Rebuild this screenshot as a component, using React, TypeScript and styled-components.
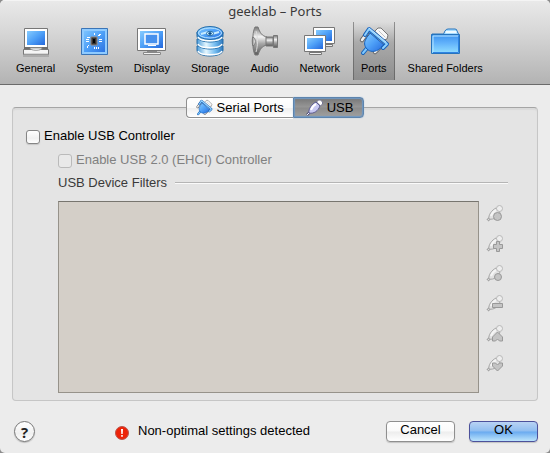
import React, { useState } from "react";
import styled, { createGlobalStyle } from "styled-components";

const GlobalStyle = createGlobalStyle`
  * { box-sizing: border-box; }
  body {
    margin: 0;
    background: #8c8c8c;
    font-family: "Liberation Sans", Arial, sans-serif;
    font-size: 13px;
    line-height: 16px;
    color: #000;
  }
  button, input { font: inherit; color: inherit; margin: 0; }
`;

const Window = styled.div`
  display: flex;
  flex-direction: column;
  min-height: 100vh;
  background: #ececec;
  border-radius: 5px;
  overflow: hidden;
`;

const Header = styled.header`
  background: linear-gradient(#e9e9e9, #d8d8d8 35%, #b3b3b3);
  border-bottom: 1px solid #6b6b6b;
  border-top: 1px solid #f4f4f4;
  padding: 0 8px 4px;
`;

const Title = styled.h1`
  margin: 0;
  padding-bottom: 1px;
  font: 13px/20px "Noto Sans", "Open Sans", sans-serif;
  color: #3a3a3a;
  text-align: center;
`;

const Toolbar = styled.nav`
  display: flex;
  gap: 5px;
`;

const ToolButton = styled.button<{ $active?: boolean }>`
  display: flex;
  flex-direction: column;
  align-items: center;
  gap: 4px;
  height: 58px;
  padding: 3px 0 0;
  border: 0;
  background: ${(p) =>
    p.$active
      ? "linear-gradient(90deg, rgba(70,70,70,.5) 1px, transparent 1px, transparent calc(100% - 1px), rgba(70,70,70,.5) calc(100% - 1px)), linear-gradient(rgba(0,0,0,0), rgba(0,0,0,.18) 35%, rgba(0,0,0,.22))"
      : "none"};
  font-size: 11px;
  line-height: 14px;
  white-space: nowrap;
`;

const ToolLabel = styled.span`
  padding: 0 8px;
`;

const Content = styled.main`
  flex: 1;
  display: flex;
  flex-direction: column;
  padding: 12px 12px 0;
`;

const Tabs = styled.div`
  display: flex;
  align-self: center;
  height: 21px;
  margin-bottom: -11px;
  z-index: 1;
`;

const Tab = styled.button<{ $active: boolean }>`
  display: flex;
  align-items: center;
  gap: 4px;
  padding: 0 9px;
  border: 1px solid ${(p) => (p.$active ? "#5d84ad" : "#8f8f8f")};
  background: ${(p) =>
    p.$active ? "linear-gradient(#777, #959595 45%, #8c8c8c 55%, #a0a0a0)" : "linear-gradient(#fff, #fafafa 50%, #eee 52%, #fff)"};
  box-shadow: ${(p) => (p.$active ? "0 0 1px #79a9dc, inset 0 0 1px 1px #6f98c4" : "0 1px 0 #fff")};
  line-height: 18px;
  &:first-child { border-radius: 4px 0 0 4px; border-right: 0; }
  &:last-child { border-radius: 0 4px 4px 0; padding: 0 10px 0 12px; }
`;

const Panel = styled.section`
  flex: 1;
  display: flex;
  flex-direction: column;
  padding: 20px 29px 7px 13px;
  background: #e4e4e4;
  border: 1px solid #c6c6c6;
  border-top: 1px solid #a5a5a5;
  border-radius: 4px;
  box-shadow: inset 0 2px 1px #dadada;
`;

const CheckLabel = styled.label<{ $muted?: boolean }>`
  display: flex;
  gap: 4px;
  height: 24px;
  margin-left: ${(p) => (p.$muted ? "32px" : "0")};
  color: ${(p) => (p.$muted ? "#808080" : "#000")};
  line-height: 15px;
`;

const Checkbox = styled.input`
  appearance: none;
  width: 14px;
  height: 14px;
  margin-top: 2px;
  border: 1px solid #858585;
  border-radius: 3px;
  background: linear-gradient(#fff, #f1f1f1 60%, #fff);
  box-shadow: 0 1px 1px #c6c6c6;
  &:checked { background: #69a5e8; }
  &:disabled { border-color: #bababa; background: #e9e9e9; box-shadow: none; }
`;

const Filters = styled.div`
  flex: 1;
  display: flex;
  flex-direction: column;
  padding-left: 32px;
`;

const FilterHeading = styled.h2`
  display: flex;
  align-items: center;
  gap: 8px;
  margin: 0 0 11px;
  font-size: 13px;
  font-weight: normal;
  line-height: 14px;
  color: #3a3a3a;
  &::after {
    content: "";
    flex: 1;
    height: 2px;
    background: linear-gradient(#b5b5b5 50%, #fafafa 50%);
  }
`;

const FilterBody = styled.div`
  flex: 1;
  display: flex;
  gap: 7px;
`;

const DeviceList = styled.ul`
  flex: 1;
  min-height: 190px;
  margin: 0;
  padding: 0;
  list-style: none;
  background: #d4cfc8;
  border: 1px solid #96928a;
  border-top-color: #77756f;
`;

const FilterTools = styled.div`
  display: flex;
  flex-direction: column;
  gap: 12px;
  padding-top: 4px;
  width: 22px;
`;

const FilterTool = styled.button`
  display: flex;
  width: 18px;
  height: 18px;
  padding: 0;
  border: 0;
  background: none;
`;

const Footer = styled.footer`
  display: flex;
  align-items: center;
  gap: 14px;
  padding: 20px 12px 11px 14px;
`;

const HelpButton = styled.button`
  width: 21px;
  height: 21px;
  padding: 0;
  border: 1px solid #777;
  border-radius: 50%;
  background: linear-gradient(#fff, #f0f0f0 60%, #fff);
  box-shadow: 0 1px 1px #bbb;
  font: bold 15px/18px "Open Sans", sans-serif;
  color: #222;
`;

const Warning = styled.p`
  flex: 1;
  display: flex;
  gap: 9px;
  margin: 0 0 0 66px;
  line-height: 15px;
  svg { margin-top: 3px; }
`;

const PushButton = styled.button<{ $primary?: boolean }>`
  width: 69px;
  height: 21px;
  padding: 0 0 3px;
  border: 1px solid ${(p) => (p.$primary ? "#4c519b" : "#8f8f8f")};
  border-radius: 4px;
  background: ${(p) =>
    p.$primary ? "linear-gradient(#b9d3f4, #8fbdf0 48%, #69aaf0 52%, #bce4fb)" : "linear-gradient(#fff, #fafafa 48%, #ededed 52%, #fff)"};
  box-shadow: 0 1px 1px #c4c4c4;
  line-height: 16px;
`;

type IconName = "general" | "system" | "display" | "storage" | "audio" | "network" | "ports" | "folders";

function Tones({ id }: { id: string }) {
  return (
    <defs>
      <linearGradient id={id} x1="0" y1="0" x2="1" y2="1">
        <stop offset="0" stopColor="#86ccff" />
        <stop offset=".5" stopColor="#4d9ff7" />
        <stop offset="1" stopColor="#2468dc" />
      </linearGradient>
      <linearGradient id={id + "-metal"} x1="0" y1="0" x2="0" y2="1">
        <stop offset="0" stopColor="#777" />
        <stop offset=".35" stopColor="#f3f3f3" />
        <stop offset=".6" stopColor="#a5a5a5" />
        <stop offset="1" stopColor="#5b5b5b" />
      </linearGradient>
      <linearGradient id={id + "-rim"} x1="0" y1="0" x2="1" y2="0">
        <stop offset="0" stopColor="#4c9cd9" />
        <stop offset=".35" stopColor="#e5f7ff" />
        <stop offset=".7" stopColor="#72bbf0" />
        <stop offset="1" stopColor="#2e78bd" />
      </linearGradient>
      <linearGradient id={id + "-folder"} x1="0" y1="0" x2="0" y2="1">
        <stop offset="0" stopColor="#3b92ef" />
        <stop offset=".45" stopColor="#62b2fb" />
        <stop offset="1" stopColor="#93e0ff" />
      </linearGradient>
    </defs>
  );
}

function PlugShape({ fill }: { fill: string }) {
  return (
    <g strokeLinejoin="round" strokeLinecap="round">
      <path d="M17 6l3-3h3l7 7-1 4-3 1z" fill="#f7f7f7" stroke="#777" />
      <path d="M21 6l6 6" stroke="#c4c4c4" />
      <path d="M4 15l5-7M17 27l5-5" stroke="#666" strokeWidth="4.500" />
      <path d="M4 15l5-7M17 27l5-5" stroke="#f0f0f0" strokeWidth="2.500" />
      <path d="M5 28l5-6" stroke="#1762b8" strokeWidth="4" />
      <path d="M5 28l5-6" stroke="#7ec8ff" strokeWidth="2" />
      <path d="M12 8l14 12c-3 1-3 4-6 5-4 2-8 2-11-1-3-3-3-7-1-10 1-3 3-3 4-6z" fill={fill} stroke="#1761bb" />
      <path d="M7 10l4-6 18 15-4 4" stroke="#1761bb" strokeWidth="4" />
      <path d="M7 10l4-6 18 15-4 4" stroke="#8fd2ff" strokeWidth="2" />
      <path d="M11 3l17 14" stroke="#d8f1ff" strokeWidth=".8" />
    </g>
  );
}

function ToolIcon({ name }: { name: IconName }) {
  const id = `tone-${name}`;
  const fill = `url(#${id})`;
  const metal = `url(#${id}-metal)`;
  const rim = `url(#${id}-rim)`;
  return (
    <svg width="32" height="32" viewBox="0 0 32 32" fill="none" aria-hidden="true">
      <Tones id={id} />
      {name === "general" && (
        <g>
          <path d="M4.500 3.500h23v19h-23z" fill="#fff" stroke="#777" />
          <path d="M7 6h18v14H7z" fill={fill} />
          <path d="M4 22h24v2H4z" fill="#6e6e6e" />
          <path d="M3.500 24.500h25v5h-25z" fill="#f5f5f5" stroke="#777" />
          <path d="M10 23h12c0 3-12 3-12 0z" fill="#fff" stroke="#999" />
          <path d="M4 29h24" stroke="#bbb" />
          <path d="M3 31h26" stroke="#6668" />
        </g>
      )}
      {name === "system" && (
        <g>
          <path d="M3.500 3.500h26v26h-26z" fill={fill} stroke="#3b75b7" />
          <path d="M5 5h23v23H5z" stroke="#8fcbff" strokeWidth="2" />
          <path d="M13 12h6v8h-6z" fill="#333" stroke="#96867b" />
          <path d="M16 14v4" stroke="#050505" strokeWidth="2" />
          <g fill="#fff">
            <path d="M16 8h1v2h-1zM21 9h2v1h-2zM20 10h2v1h-2zM9 12h3v1H9zM8 14h3v1H8zM8 16h3v1H8zM21 14h3v1h-3zM21 16h3v1h-3zM10 20h1v1h-1zM9 21h1v2H9zM16 22h1v2h-1zM18 22h1v2h-1zM20 22h1v2h-1z" />
          </g>
        </g>
      )}
      {name === "display" && (
        <g>
          <path d="M1.500 3.500h28v22h-28z" fill="#fff" stroke="#777" />
          <path d="M4 6h23v17H4z" fill={fill} />
          <path d="M9 9h13v10H9z" fill="#4791ed" stroke="#fff" strokeWidth="1.500" />
          <path d="M12 20h8v1h-8z" fill="#fff" />
          <path d="M11 26h10v2H11z" fill="#888" />
          <path d="M7.500 27.500h17v2h-17z" fill="#f2f2f2" stroke="#888" />
        </g>
      )}
      {name === "storage" && (
        <g stroke="#246da9">
          {[23, 16, 9].map((y) => (
            <g key={y}>
              <path d={`M3 ${y - 2}v4c0 8 26 8 26 0v-4z`} fill={rim} />
              <path d={`M4 ${y + 3}c2 5 22 5 24 0`} stroke="#fff" strokeWidth="1.500" />
            </g>
          ))}
          <ellipse cx="16" cy="8" rx="13" ry="6.500" fill={fill} />
          <ellipse cx="16" cy="8" rx="11.500" ry="5" stroke="#b7e5ff" />
          <path d="M7 9l7-2M18 9l7-2" stroke="#c6ebff" strokeWidth="2" />
          <ellipse cx="16" cy="8.500" rx="3.500" ry="2.200" fill="#d7f2ff" />
          <ellipse cx="16" cy="8.500" rx="1.500" ry="1" fill="#123e78" />
        </g>
      )}
      {name === "audio" && (
        <g stroke="#777">
          <path d="M6 2h3c2 6 4 9 9 10v8c-5 1-7 4-9 10H6c-1-2-2-6-2-9-1-2-1-8 0-10 0-3 1-7 2-9z" fill={metal} />
          <path d="M17 12h7v9h-7z" fill={metal} />
          <path d="M24.500 10.500h4v12h-4z" fill={metal} />
          <path d="M7 6c2 7 2 14 0 21" stroke="#ddd" />
          <path d="M4 12c3 1 3 8 0 9z" fill="#f3f3f3" />
        </g>
      )}
      {name === "network" && (
        <g stroke="#777">
          <path d="M9.500 2.500h21v16h-21z" fill="#fff" />
          <path d="M12 5h16v11H12z" fill={fill} stroke="none" />
          <path d="M19.500 19.500h9v2h-9z" fill="#eee" />
          <path d="M.5 10.500h21v16H.5z" fill="#fff" />
          <path d="M3 13h16v11H3z" fill={fill} stroke="none" />
          <path d="M5.500 27.500h12v2h-12z" fill="#f2f2f2" />
        </g>
      )}
      {name === "ports" && <PlugShape fill={fill} />}
      {name === "folders" && (
        <g stroke="#2674bd">
          <path d="M14 10l2-4q1-2 3-2h7q2 0 2 2l2 4v18H3V9h11z" fill="#a8ddff" />
          <path d="M16.500 7h11" stroke="#eefaff" strokeWidth="2" />
          <path d="M2.500 9.500h28v19h-28z" fill={`url(#${id}-folder)`} />
          <path d="M4 27V11h25" stroke="#b6e5ff" />
          <path d="M4 27.500h25.500V11" stroke="#2f83e3" />
        </g>
      )}
    </svg>
  );
}

function SerialIcon() {
  return (
    <svg width="17" height="17" viewBox="1 1 31 30" fill="none" aria-hidden="true">
      <Tones id="tone-serial" />
      <PlugShape fill="url(#tone-serial)" />
    </svg>
  );
}

function UsbIcon() {
  return (
    <svg width="17" height="17" viewBox="0 0 17 17" fill="none" aria-hidden="true">
      <path d="M1 16l3-3" stroke="#555579" strokeWidth="2.500" />
      <path d="M1 16l3-3" stroke="#f4f4ff" />
      <path d="M10.500 3l2-2h2l2 2v2l-2 2z" fill="#fff" stroke="#777794" />
      <path d="M3 14c-1-4 3-9 7-11l4 4c-2 5-6 8-11 7z" fill="#c8c8f2" stroke="#5d5d91" />
      <path d="M5 11c1-3 3-5 5-6" stroke="#fff" strokeWidth="2" />
    </svg>
  );
}

const marks = {
  empty: "M7.500 11.500a4 4 0 1 1 8 0a4 4 0 1 1-8 0z",
  add: "M10.500 6.500h3v3h3v4h-3v3h-3v-3h-3v-4h3z",
  edit: "M8.500 12a3.500 3.500 0 1 1 7 0a3.500 3.500 0 1 1-7 0z",
  remove: "M6.500 8.500h10v4h-10z",
  up: "M11.500 7l5 5v4h-3l-2-2-2 2h-3v-4z",
  down: "M6.500 8h3l2 2 2-2h3v3l-5 5-5-5z",
};

function FilterIcon({ mark }: { mark: keyof typeof marks }) {
  return (
    <svg width="18" height="18" viewBox="0 0 18 18" fill="none" stroke="#a5a5a5" strokeLinejoin="round" aria-hidden="true">
      <path d="M1.500 15.500l3-3" strokeWidth="3" />
      <path d="M1.500 15.500l3-3" stroke="#ddd" />
      <path d="M3 14c-1-4 3-9 7-11l4 4c-2 5-6 8-11 7z" fill="#e2e2e2" />
      <path d="M5 11c1-3 3-5 5-6" stroke="#f4f4f4" strokeWidth="2" />
      <circle cx="13.500" cy="3.500" r="3" fill="#eee" stroke="#b8b8b8" />
      <path d={marks[mark]} fill="#c4c4c4" stroke="#999" />
    </svg>
  );
}

function AlertIcon() {
  return (
    <svg width="14" height="14" viewBox="0 0 14 14" aria-hidden="true">
      <circle cx="7" cy="7" r="6.500" fill="#ed2308" stroke="#b9554d" />
      <path d="M6 3h2l-.3 5H6.300zM6.200 9h1.600v1.800H6.200z" fill="#fff" />
    </svg>
  );
}

const sections: { icon: IconName; label: string }[] = [
  { icon: "general", label: "General" },
  { icon: "system", label: "System" },
  { icon: "display", label: "Display" },
  { icon: "storage", label: "Storage" },
  { icon: "audio", label: "Audio" },
  { icon: "network", label: "Network" },
  { icon: "ports", label: "Ports" },
  { icon: "folders", label: "Shared Folders" },
];

const filterTools: { mark: keyof typeof marks; label: string }[] = [
  { mark: "empty", label: "Add empty filter" },
  { mark: "add", label: "Add filter from device" },
  { mark: "edit", label: "Edit filter" },
  { mark: "remove", label: "Remove filter" },
  { mark: "up", label: "Move filter up" },
  { mark: "down", label: "Move filter down" },
];

export default function App() {
  const [tab, setTab] = useState("usb");
  const [usb, setUsb] = useState(false);
  return (
    <>
      <GlobalStyle />
      <Window>
        <Header>
          <Title>geeklab – Ports</Title>
          <Toolbar>
            {sections.map((s) => (
              <ToolButton key={s.icon} type="button" $active={s.icon === "ports"}>
                <ToolIcon name={s.icon} />
                <ToolLabel>{s.label}</ToolLabel>
              </ToolButton>
            ))}
          </Toolbar>
        </Header>
        <Content>
          <Tabs role="tablist">
            <Tab type="button" role="tab" aria-selected={tab === "serial"} $active={tab === "serial"} onClick={() => setTab("serial")}>
              <SerialIcon />
              Serial Ports
            </Tab>
            <Tab type="button" role="tab" aria-selected={tab === "usb"} $active={tab === "usb"} onClick={() => setTab("usb")}>
              <UsbIcon />
              USB
            </Tab>
          </Tabs>
          <Panel role="tabpanel">
            <CheckLabel>
              <Checkbox type="checkbox" checked={usb} onChange={(e) => setUsb(e.target.checked)} />
              Enable USB Controller
            </CheckLabel>
            <CheckLabel $muted>
              <Checkbox type="checkbox" disabled />
              Enable USB 2.0 (EHCI) Controller
            </CheckLabel>
            <Filters>
              <FilterHeading>USB Device Filters</FilterHeading>
              <FilterBody>
                <DeviceList aria-label="USB Device Filters" />
                <FilterTools>
                  {filterTools.map((t) => (
                    <FilterTool key={t.mark} type="button" aria-label={t.label} disabled>
                      <FilterIcon mark={t.mark} />
                    </FilterTool>
                  ))}
                </FilterTools>
              </FilterBody>
            </Filters>
          </Panel>
        </Content>
        <Footer>
          <HelpButton type="button" aria-label="Help">?</HelpButton>
          <Warning>
            <AlertIcon />
            Non-optimal settings detected
          </Warning>
          <PushButton type="button">Cancel</PushButton>
          <PushButton type="button" $primary>OK</PushButton>
        </Footer>
      </Window>
    </>
  );
}
